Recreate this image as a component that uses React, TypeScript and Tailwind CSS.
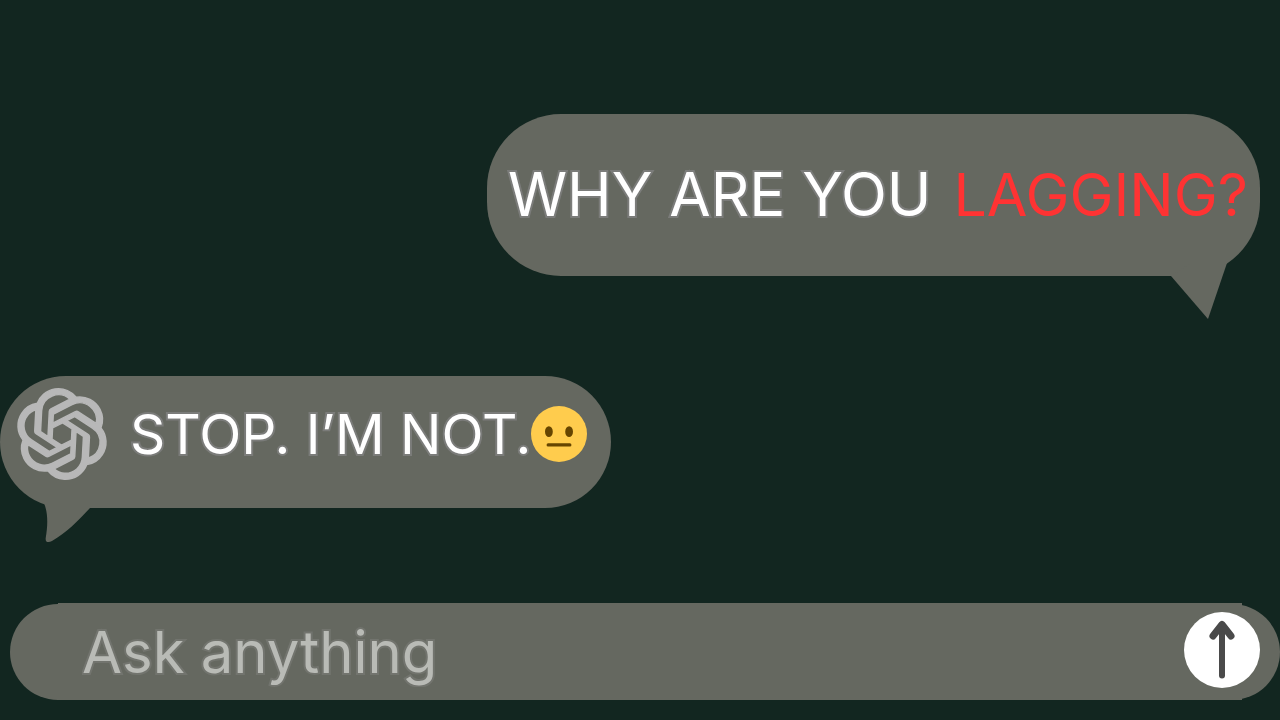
import type { ReactNode } from "react";
import { SiOpenai } from "react-icons/si";

export default function App() {
  return (
    <main className="flex min-h-screen flex-col overflow-hidden bg-[#122620] pt-[114px] pb-5 font-[Inter,sans-serif]">
      <UserBubble>
        <Outlined>WHY ARE YOU</Outlined>
        <span className="text-[59px] text-[#ff3333]">LAGGING?</span>
      </UserBubble>
      <BotBubble>STOP. I’M NOT.</BotBubble>
      <PromptBar />
    </main>
  );
}

function Outlined({ children }: { children: ReactNode }) {
  return (
    <span className="text-white [-webkit-text-stroke:4px_#7b7c7a] [paint-order:stroke]">
      {children}
    </span>
  );
}

function UserBubble({ children }: { children: ReactNode }) {
  return (
    <div className="relative mr-5 flex h-[162px] items-center gap-[22px] self-end rounded-[74px] bg-[#656860] pr-3 pb-[2px] pl-[21px] text-[60px] leading-none whitespace-nowrap">
      {children}
      <svg
        className="absolute right-[33px] -bottom-[43px] h-14 w-14 fill-[#656860]"
        viewBox="0 0 56 56"
        aria-hidden="true"
      >
        <path d="M0 13 L37 56 L56 0 L20 0 Z" />
      </svg>
    </div>
  );
}

function BotBubble({ children }: { children: ReactNode }) {
  return (
    <div className="relative mt-[100px] flex h-[132px] items-center self-start rounded-[68px] bg-[#656860] pr-6 pb-4 pl-[17px] text-[55px] leading-none whitespace-nowrap">
      <SiOpenai
        className="mr-[23px] size-[90px] rotate-3 overflow-visible stroke-[#b8b8b8] stroke-[0.4] text-[#b8b8b8]"
        aria-label="ChatGPT"
      />
      <Outlined>{children}</Outlined>
      <NeutralFace />
      <svg
        className="absolute -bottom-[35px] left-11 h-12 w-12 fill-[#656860]"
        viewBox="0 0 48 48"
        aria-hidden="true"
      >
        <path d="M0 8 C4 18 4 29 1.7 43 C1.2 47 4 48.2 8 46 C22 38 34 26 46 13 L46 0 L0 0 Z" />
      </svg>
    </div>
  );
}

function NeutralFace() {
  return (
    <svg className="size-14" viewBox="0 0 36 36" role="img" aria-label="Neutral face">
      <circle cx="18" cy="18" r="18" fill="#ffcc4d" />
      <ellipse cx="11.5" cy="16.5" rx="2.5" ry="3.5" fill="#664500" />
      <ellipse cx="24.5" cy="16.5" rx="2.5" ry="3.5" fill="#664500" />
      <path d="M25 26H11a1 1 0 1 1 0-2h14a1 1 0 1 1 0 2z" fill="#664500" />
    </svg>
  );
}

function PromptBar() {
  return (
    <form
      className="relative mt-auto ml-[10px] flex h-24 items-center rounded-full bg-[#656860] pr-5 pl-[72px] before:absolute before:-top-px before:right-[38px] before:left-12 before:h-[97px] before:bg-[#656860]"
      onSubmit={(e) => e.preventDefault()}
    >
      <input
        type="text"
        aria-label="Message"
        placeholder="Ask anything"
        className="relative h-20 min-w-0 flex-1 bg-transparent text-[58px] text-[#b9bbb6] outline-none [-webkit-text-stroke:4px_#72746e] [paint-order:stroke] placeholder:text-[#b9bbb6] placeholder:opacity-100"
      />
      <button
        type="submit"
        aria-label="Send"
        className="relative mb-1 flex size-[76px] items-center justify-center rounded-full bg-white"
      >
        <svg
          className="h-[60px] w-7 fill-none stroke-[#4a4a4a]"
          viewBox="0 0 28 60"
          strokeLinecap="round"
          strokeLinejoin="round"
        >
          <path d="M14 55.500V5" strokeWidth="6" />
          <path d="M5 16L14 4.500L23 16" strokeWidth="7" />
        </svg>
      </button>
    </form>
  );
}
